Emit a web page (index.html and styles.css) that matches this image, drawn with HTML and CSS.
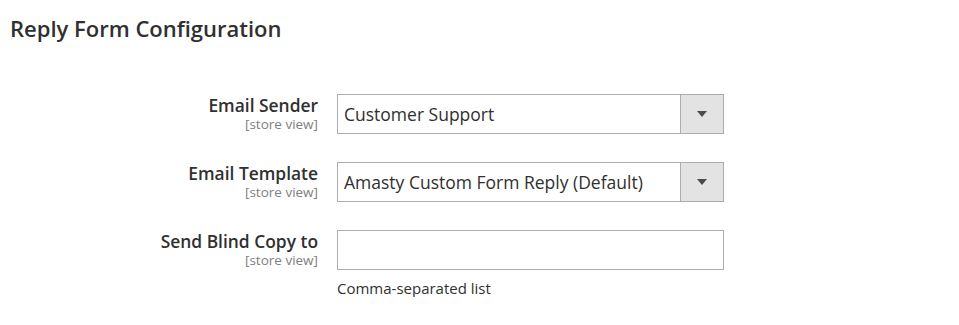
FILE: index.html
```html
<!DOCTYPE html>
<html>
<head>
<meta charset="utf-8">
<link rel="stylesheet" href="styles.css">
</head>
<body>
<div class="page">
  <h1 class="title">Reply Form Configuration</h1>
  <div class="form">
    <div class="row">
      <div class="label"><span class="name">Email Sender</span><span class="scope">[store view]</span></div>
      <div class="control">
        <div class="select"><span class="value">Customer Support</span><span class="arrow"><svg width="10" height="6" viewBox="0 0 10 6"><path d="M0 0H10L5 6Z" fill="#514943"/></svg></span></div>
      </div>
    </div>
    <div class="row">
      <div class="label"><span class="name">Email Template</span><span class="scope">[store view]</span></div>
      <div class="control">
        <div class="select"><span class="value">Amasty Custom Form Reply (Default)</span><span class="arrow"><svg width="10" height="6" viewBox="0 0 10 6"><path d="M0 0H10L5 6Z" fill="#514943"/></svg></span></div>
      </div>
    </div>
    <div class="row">
      <div class="label"><span class="name">Send Blind Copy to</span><span class="scope">[store view]</span></div>
      <div class="control">
        <div class="input"></div>
        <div class="note">Comma-separated list</div>
      </div>
    </div>
  </div>
</div>
</body>
</html>
```
FILE: styles.css
```css
html, body { margin: 0; padding: 0; background: #fff; }
body { font-family: "Open Sans", sans-serif; color: #303030; }
.page { padding: 13px 10px 0 10px; }
.title { margin: 0; font-size: 22px; font-weight: 600; line-height: 30px; color: #303030; }
.form { display: flex; flex-direction: column; gap: 28px; margin-top: 51px; }
.row { display: flex; gap: 19px; }
.label { width: 308px; display: flex; flex-direction: column; align-items: flex-end; }
.name { font-size: 17.4px; font-weight: 600; line-height: 22px; color: #303030; }
.scope { font-size: 13.5px; line-height: 16px; color: #808080; }
.control { width: 387px; }
.select, .input { box-sizing: border-box; height: 40px; border: 1px solid #adadad; background: #fff; display: flex; align-items: center; }
.value { flex: 1; padding-left: 6px; font-size: 17.5px; color: #303030; white-space: nowrap; }
.arrow { width: 42px; align-self: stretch; background: #e3e3e3; border-left: 1px solid #adadad; display: flex; align-items: center; justify-content: center; }
.note { margin-top: 9px; font-size: 15px; line-height: 18px; color: #303030; }
```
